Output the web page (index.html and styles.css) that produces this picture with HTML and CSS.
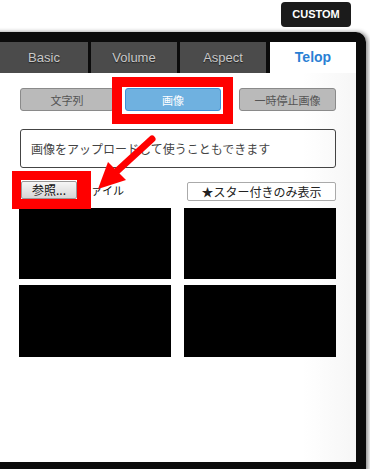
FILE: index.html
```html
<!DOCTYPE html>
<html lang="ja">
<head>
    <meta charset="UTF-8">
    <meta name="viewport" content="width=device-width, initial-scale=1.0">
    <title>Telop</title>
    <link rel="stylesheet" href="styles.css">
</head>
<body>
	<div class="topbar">
		<span class="custom">CUSTOM</span>
	</div>
	<div class="panel">
		<div class="tabs">
			<div class="tab tabFirst">Basic</div>
			<div class="tab">Volume</div>
			<div class="tab">Aspect</div>
			<div class="tab active">Telop</div>
		</div>
		<div class="content">
			<div class="modes">
				<button class="mode modeText">文字列</button>
				<button class="mode modeImage on">画像</button>
				<button class="mode modePause">一時停止画像</button>
			</div>
			<div class="note">画像をアップロードして使うこともできます</div>
			<div class="fileRow">
				<div class="file">
					<button class="browse">参照...</button>
					<span class="fname">ファイル</span>
				</div>
				<button class="star">★スター付きのみ表示</button>
			</div>
			<div class="thumbs">
				<div class="thumb"></div>
				<div class="thumb"></div>
				<div class="thumb"></div>
				<div class="thumb"></div>
			</div>
		</div>
	</div>

	<!-- annotations drawn over the screenshot -->
	<div class="mark mark1"></div>
	<div class="mark mark2"></div>
	<svg class="arrow" width="370" height="469" viewBox="0 0 370 469">
		<line x1="152" y1="139" x2="116" y2="172" stroke="#f00" stroke-width="7" stroke-linecap="round"/>
		<polygon points="98,189 108,162 126,180" fill="#f00"/>
	</svg>
</body>
</html>
```

FILE: styles.css
```css
body,html{
	margin: 0;
	padding: 0;
	background: #fff;
	overflow: hidden;
	height: 469px;
}
body{
	position: relative;
	font-family: "Liberation Sans", "Noto Sans CJK JP", sans-serif;
}
.topbar{
	height: 32px;
	display: flex;
	justify-content: flex-end;
	padding-right: 19px;
	box-sizing: border-box;
}
.custom{
	margin-top: 2px;
	width: 70px;
	height: 25px;
	line-height: 25px;
	background: #1b1b1b;
	border-radius: 4px;
	color: #fff;
	font-size: 11px;
	font-weight: 700;
	text-align: center;
}
.panel{
	margin-left: -10px;
	width: 356px;
	height: 420px;
	border: 10px solid #0b0b0b;
	border-top-right-radius: 10px;
	background: linear-gradient(to right, #fff 85%, #f6f6f6);
	box-shadow: 2px 0 4px rgba(0,0,0,0.45);
	overflow: hidden;
}
.tabs{
	display: flex;
	gap: 3px;
	height: 31px;
	background: #0b0b0b;
}
.tab{
	width: 86px;
	background: #4b4b4b;
	color: #c8c8c8;
	font-size: 13px;
	line-height: 31px;
	text-align: center;
	text-shadow: 0 1px 1px #222;
}
.tabFirst{ width: 88px; }
.tab.active{
	margin-left: 1px;
	background: #fff;
	color: #2a7fd4;
	font-size: 14px;
	font-weight: 700;
	text-shadow: none;
}
.content{
	padding: 15px 20px 0;
}
.modes{
	display: flex;
	height: 23px;
}
.mode{
	height: 23px;
	padding: 0;
	border: 1px solid #8a8a8a;
	border-radius: 3px;
	background: #bababa;
	color: #555;
	font-family: "Noto Sans CJK JP", sans-serif;
	font-size: 11px;
}
.modeText{ width: 94px; }
.modeImage{
	width: 96px;
	margin-left: 11px;
}
.modePause{
	width: 97px;
	margin-left: 18px;
}
.mode.on{
	background: #6fb1e0;
	border-color: #3d8fd8;
	color: #fff;
}
.note{
	margin-top: 18px;
	height: 37px;
	border: 1px solid #444;
	border-radius: 3px;
	padding-left: 10px;
	line-height: 37px;
	color: #444;
	font-family: "Noto Sans CJK JP", sans-serif;
	font-size: 12px;
}
.fileRow{
	display: flex;
	justify-content: space-between;
	align-items: flex-start;
	margin-top: 13px;
	height: 27px;
}
.file{
	display: flex;
	align-items: center;
	padding-left: 1px;
}
.browse{
	width: 56px;
	height: 18px;
	padding: 0;
	border: 1px solid #999;
	border-radius: 2px;
	background: linear-gradient(#f6f6f6, #d6d6d6);
	color: #111;
	font-family: "Noto Sans CJK JP", sans-serif;
	font-size: 12px;
	line-height: 16px;
}
.fname{
	margin-left: 3px;
	color: #111;
	font-family: "Noto Sans CJK JP", sans-serif;
	font-size: 11px;
}
.star{
	margin-top: 1px;
	width: 149px;
	height: 19px;
	padding: 0;
	border: 1px solid #aaa;
	border-radius: 2px;
	background: #fff;
	color: #222;
	font-family: "Noto Sans CJK JP", sans-serif;
	font-size: 12px;
	line-height: 17px;
}
.thumbs{
	margin-left: -1px;
	display: grid;
	grid-template-columns: 152px 152px;
	grid-template-rows: 71px 72px;
	column-gap: 13px;
	row-gap: 6px;
}
.thumb{
	background: #000;
}
.mark{
	position: absolute;
	border: 10px solid #f00;
	box-sizing: border-box;
}
.mark1{
	left: 112px;
	top: 77px;
	width: 121px;
	height: 47px;
}
.mark2{
	left: 12px;
	top: 171px;
	width: 79px;
	height: 38px;
	border-width: 9px 14px 10px 9px;
}
.arrow{
	position: absolute;
	left: 0;
	top: 0;
}
```
